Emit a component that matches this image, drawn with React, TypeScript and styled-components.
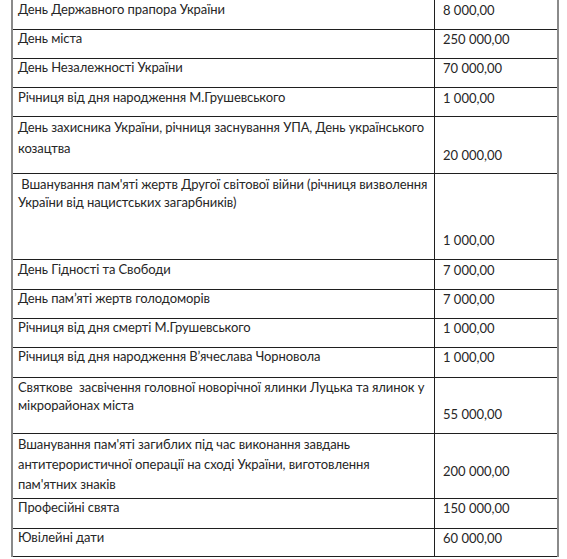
import React from "react";
import styled, { createGlobalStyle } from "styled-components";

const Global = createGlobalStyle`
  html, body { margin: 0; padding: 0; background: #ffffff; }
  body { font-family: Lato, "Liberation Sans", sans-serif; color: #262626; }
`;

const Table = styled.div`
  margin-left: 11px;
  width: 544px;
  border-left: 2px solid #8a8a8a;
  border-right: 2px solid #8a8a8a;
  display: flex;
  flex-direction: column;
`;

const Row = styled.div<{ $h: number }>`
  display: grid;
  grid-template-columns: 422px 1fr;
  height: ${(p) => p.$h}px;
  box-sizing: border-box;
  border-bottom: 1px solid #1f1f1f;
`;

const Label = styled.div<{ $pt: number; $lh: number }>`
  padding: ${(p) => p.$pt}px 0 0 5px;
  font-size: 13px;
  letter-spacing: -0.08px;
  line-height: ${(p) => p.$lh}px;
  border-right: 1px solid #1f1f1f;
  overflow: hidden;
`;

const Line = styled.div`
  white-space: pre;
`;

const Value = styled.div<{ $pt: number }>`
  padding: ${(p) => p.$pt}px 0 0 8px;
  font-size: 13px;
  line-height: 18px;
  white-space: pre;
`;

type R = { h: number; lines: string[]; value: string; pt: number; vpt: number; lh: number };

const rows: R[] = [
  { h: 30, lines: ["День Державного прапора України"], value: "8 000,00", pt: 1, vpt: 1, lh: 17 },
  { h: 29, lines: ["День міста"], value: "250 000,00", pt: 0, vpt: 0, lh: 17 },
  { h: 29, lines: ["День Незалежності України"], value: "70 000,00", pt: 0, vpt: 0, lh: 17 },
  { h: 29, lines: ["Річниця від дня народження М.Грушевського"], value: "1 000,00", pt: 1, vpt: 1, lh: 17 },
  { h: 57, lines: ["День захисника України, річниця заснування УПА, День українського", "козацтва"], value: "20 000,00", pt: 0, vpt: 29, lh: 21 },
  { h: 86, lines: [" Вшанування пам'яті жертв Другої світової війни (річниця визволення", "України від нацистських загарбників)"], value: "1 000,00", pt: 1, vpt: 57, lh: 18 },
  { h: 30, lines: ["День Гідності та Свободи"], value: "7 000,00", pt: 1, vpt: 1, lh: 17 },
  { h: 29, lines: ["День пам’яті жертв голодоморів"], value: "7 000,00", pt: 0, vpt: 0, lh: 17 },
  { h: 29, lines: ["Річниця від дня смерті М.Грушевського"], value: "1 000,00", pt: 0, vpt: 0, lh: 17 },
  { h: 30, lines: ["Річниця від дня народження В’ячеслава Чорновола"], value: "1 000,00", pt: 0, vpt: 0, lh: 17 },
  { h: 56, lines: ["Святкове  засвічення головної новорічної ялинки Луцька та ялинок у", "мікрорайонах міста"], value: "55 000,00", pt: 0, vpt: 27, lh: 18 },
  { h: 65, lines: ["Вшанування пам'яті загиблих під час виконання завдань", "антитерористичної операції на сході України, виготовлення", "пам'ятних знаків"], value: "200 000,00", pt: 0, vpt: 28, lh: 20 },
  { h: 30, lines: ["Професійні свята"], value: "150 000,00", pt: 0, vpt: 0, lh: 17 },
  { h: 28, lines: ["Ювілейні дати"], value: "60 000,00", pt: 0, vpt: 0, lh: 17 },
];

export default function App() {
  return (
    <>
      <Global />
      <Table>
        {rows.map((r, i) => (
          <Row key={i} $h={r.h}>
            <Label $pt={r.pt} $lh={r.lh}>
              {r.lines.map((l, j) => (
                <Line key={j}>{l}</Line>
              ))}
            </Label>
            <Value $pt={r.vpt}>{r.value}</Value>
          </Row>
        ))}
      </Table>
    </>
  );
}
